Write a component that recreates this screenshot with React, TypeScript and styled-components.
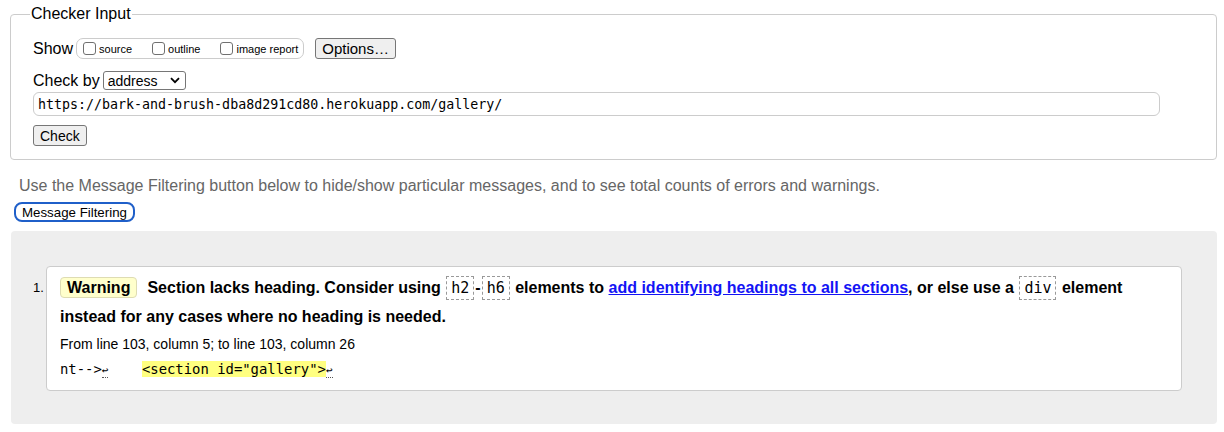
import styled, { createGlobalStyle } from "styled-components";

const GlobalStyle = createGlobalStyle`
    html, body {
        margin: 0;
        padding: 0;
        background: #fff;
    }
    body {
        font-family: "Liberation Sans", Arial, sans-serif;
        color: #000;
    }
`;

const Page = styled.main`
    padding: 5px 7px 10px 10px;
`;

const Fieldset = styled.fieldset`
    margin: 0;
    border: 1px solid #ccc;
    border-radius: 4px;
    padding: 8px 20px 13px 22px;
`;

const Legend = styled.legend`
    font-size: 16px;
    padding: 0 1px;
    margin-left: -3px;
    line-height: 18px;
`;

const Row = styled.div<{ $mt?: number }>`
    display: flex;
    align-items: center;
    margin-top: ${p => p.$mt ?? 0}px;
    font-size: 16px;
`;

const Label = styled.span`
    font-size: 16px;
    margin-right: 3px;
`;

const OptionGroup = styled.span`
    display: inline-flex;
    align-items: center;
    height: 19px;
    border: 1px solid #ccc;
    border-radius: 7px;
    padding: 0 5px 0 6px;
    gap: 20px;
    margin-right: 11px;
`;

const CheckLabel = styled.label`
    display: inline-flex;
    align-items: center;
    font-size: 11px;
    gap: 3px;
`;

const Box = styled.input`
    appearance: none;
    margin: 0;
    width: 13px;
    height: 13px;
    border: 1px solid #707070;
    border-radius: 3px;
    background: #fff;
`;

const Button = styled.button<{ $size?: number }>`
    font-family: "Liberation Sans", Arial, sans-serif;
    font-size: ${p => p.$size ?? 14}px;
    background: #efefef;
    border: 1px solid #767676;
    border-radius: 3px;
    padding: 0 6px;
    height: 21px;
    color: #000;
`;

const SelectWrap = styled.span`
    position: relative;
    display: inline-flex;
`;

const Select = styled.select`
    appearance: none;
    font-family: "Liberation Sans", Arial, sans-serif;
    font-size: 14px;
    width: 83px;
    height: 19px;
    padding: 0 4px;
    border: 1px solid #767676;
    border-radius: 3px;
    background: #fff;
    color: #000;
`;

const Chevron = styled.svg`
    position: absolute;
    right: 6px;
    top: 6px;
    pointer-events: none;
`;

const UrlInput = styled.input`
    display: block;
    box-sizing: border-box;
    width: 1127px;
    height: 24px;
    margin-top: 2px;
    padding: 0 4px;
    font-family: "DejaVu Sans Mono", Menlo, monospace;
    font-size: 13.3px;
    border: 1px solid #ccc;
    border-radius: 6px;
    color: #000;
`;

const Intro = styled.p`
    margin: 17px 0 0 9px;
    font-size: 16px;
    line-height: 18px;
    color: #666;
`;

const FilterButton = styled.button`
    display: block;
    margin: 7px 0 0 4px;
    height: 20px;
    padding: 0 6px;
    background: #fff;
    border: 2px solid #1f5fc9;
    border-radius: 8px;
    font-family: "Liberation Sans", Arial, sans-serif;
    font-size: 13.3px;
    color: #000;
`;

const Results = styled.ol`
    margin: 9px 0 0 1px;
    padding: 35px 35px 33px 35px;
    background: #eee;
    border-radius: 4px;
    list-style: none;
`;

const Item = styled.li`
    display: flex;
    align-items: flex-start;
    margin-left: -13px;
`;

const Number = styled.span`
    width: 13px;
    font-size: 13px;
    line-height: 29px;
    margin-top: 7px;
`;

const Card = styled.div`
    flex: 1;
    background: #fff;
    border: 1px solid #ccc;
    border-radius: 4px;
    padding: 6px 14px 7px 13px;
`;

const Message = styled.p`
    margin: 0;
    font-size: 16px;
    font-weight: bold;
    line-height: 29px;
`;

const Badge = styled.span`
    display: inline-block;
    background: #ffffcc;
    border: 1px solid #dedcb3;
    border-radius: 4px;
    padding: 0 6px;
    line-height: 19px;
    margin-right: 10px;
`;

const Code = styled.code`
    display: inline-block;
    font-family: "DejaVu Sans Mono", Menlo, monospace;
    font-weight: normal;
    font-size: 15px;
    line-height: 22px;
    border: 1px dashed #999;
    padding: 0 4px;
    margin: 0 1px;
`;

const Link = styled.a`
    color: #1414f5;
    text-decoration: underline;
`;

const Location = styled.p`
    margin: 0;
    font-size: 14px;
    line-height: 26px;
`;

const Extract = styled.p`
    margin: 0;
    font-family: "DejaVu Sans Mono", Menlo, monospace;
    font-size: 13.9px;
    line-height: 24px;
    white-space: pre;
`;

const Mark = styled.mark`
    background: #ffff80;
    color: #000;
`;

const Lf = styled.span`
    font-size: 11px;
    border-bottom: 1px dotted #555;
`;

export default function App() {
    return (
        <Page>
            <GlobalStyle />
            <Fieldset>
                <Legend>Checker Input</Legend>
                <Row $mt={7}>
                    <Label>Show</Label>
                    <OptionGroup>
                        <CheckLabel><Box type="checkbox" />source</CheckLabel>
                        <CheckLabel><Box type="checkbox" />outline</CheckLabel>
                        <CheckLabel><Box type="checkbox" />image report</CheckLabel>
                    </OptionGroup>
                    <Button $size={15}>Options…</Button>
                </Row>
                <Row $mt={12}>
                    <Label>Check by</Label>
                    <SelectWrap>
                        <Select defaultValue="address">
                            <option value="address">address</option>
                        </Select>
                        <Chevron width="10" height="7" viewBox="0 0 10 7">
                            <path d="M1 1.2 L5 5.2 L9 1.2" fill="none" stroke="#000" strokeWidth="1.8" />
                        </Chevron>
                    </SelectWrap>
                </Row>
                <UrlInput readOnly value="https://bark-and-brush-dba8d291cd80.herokuapp.com/gallery/" />
                <Row $mt={9}>
                    <Button>Check</Button>
                </Row>
            </Fieldset>

            <Intro>Use the Message Filtering button below to hide/show particular messages, and to see total counts of errors and warnings.</Intro>
            <FilterButton>Message Filtering</FilterButton>

            <Results>
                <Item>
                    <Number>1.</Number>
                    <Card>
                        <Message>
                            <Badge>Warning</Badge>
                            Section lacks heading. Consider using <Code>h2</Code>-<Code>h6</Code> elements to{" "}
                            <Link href="#">add identifying headings to all sections</Link>, or else use a <Code>div</Code> element instead for any cases where no heading is needed.
                        </Message>
                        <Location>From line 103, column 5; to line 103, column 26</Location>
                        <Extract>nt--&gt;<Lf>↩</Lf>    <Mark>&lt;section id="gallery"&gt;</Mark><Lf>↩</Lf></Extract>
                    </Card>
                </Item>
            </Results>
        </Page>
    );
}
